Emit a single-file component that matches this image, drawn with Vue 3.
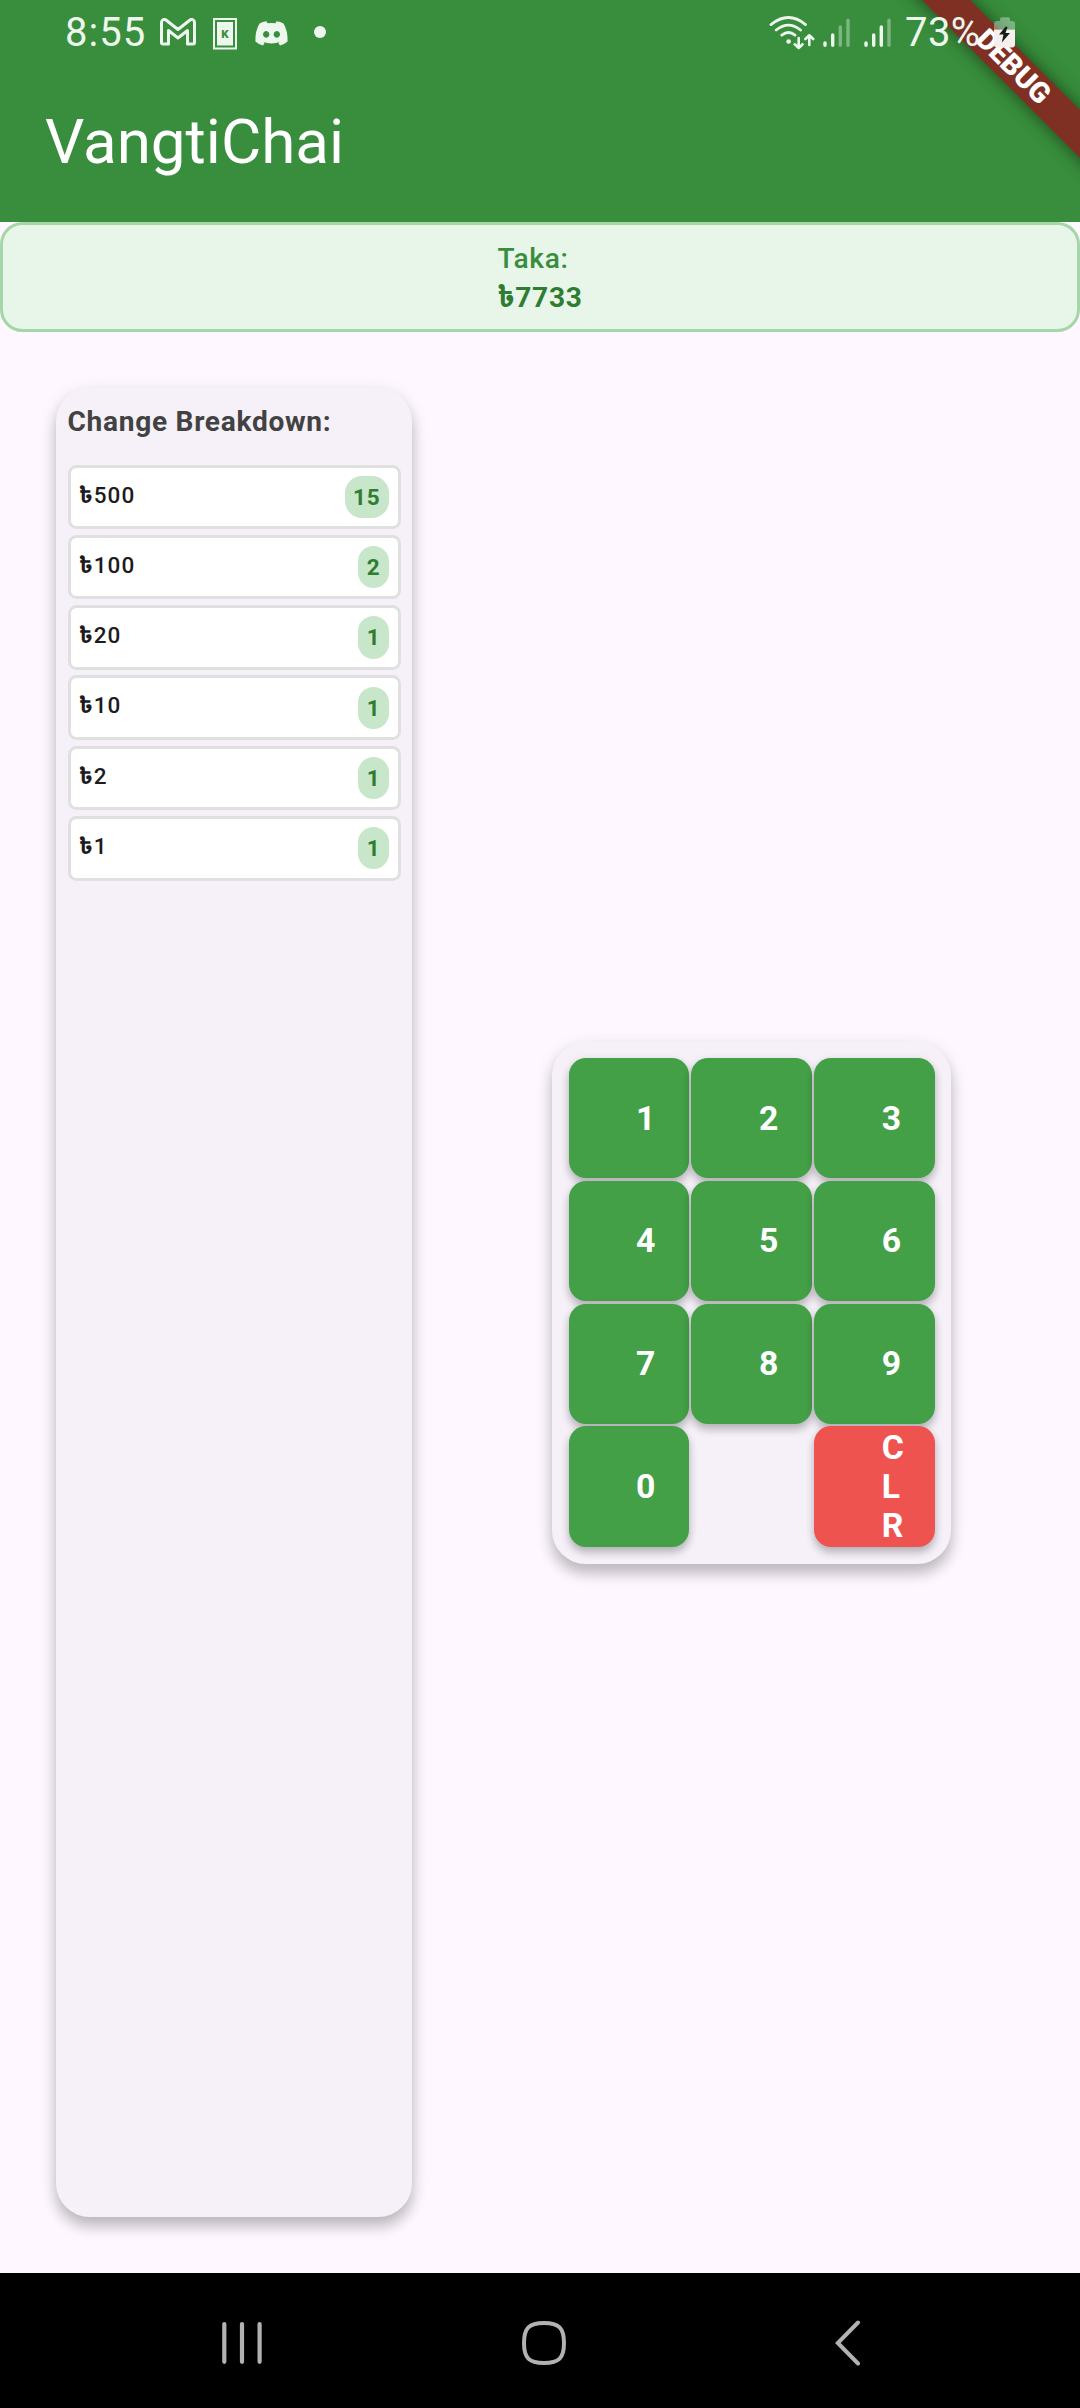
<script setup>
const rows = [
  { note: 500, count: 15 },
  { note: 100, count: 2 },
  { note: 20, count: 1 },
  { note: 10, count: 1 },
  { note: 2, count: 1 },
  { note: 1, count: 1 },
]
const keys = ['1', '2', '3', '4', '5', '6', '7', '8', '9', '0', '', 'CLR']
</script>

<template>
  <div class="screen">
    <header class="top">
      <div class="ribbon-clip"><div class="ribbon">DEBUG</div></div>
      <div class="status">
        <span class="clock">8:55</span>
        <svg class="gmail" width="36" height="28" viewBox="0 0 36 28">
          <path d="M1.5 4.5C1.5 1.8 4 .6 6 2L18 11.5 30 2C32 .6 34.500 1.800 34.500 4.500V24.500Q34.500 26 33 26H27.500V12.500L18 20 8.500 12.500V26H3Q1.500 26 1.500 24.500Z" fill="none" stroke="#eef7ee" stroke-width="3" stroke-linejoin="round" />
        </svg>
        <svg class="kbox" width="24" height="32" viewBox="0 0 24 32">
          <rect x="1" y="1" width="22" height="29.500" fill="none" stroke="#eef7ee" stroke-width="2" />
          <rect x="4" y="4" width="16" height="23.500" fill="#eef7ee" />
          <text x="12" y="19.500" text-anchor="middle" font-family="Roboto, sans-serif" font-size="11.500" font-weight="900" fill="#388e3c">K</text>
        </svg>
        <svg class="discord" width="33" height="25" viewBox="0 0 33 25">
          <path fill-rule="evenodd" fill="#eef7ee" d="M11.500.3 12.500 2.200Q16.500 1.600 20.500 2.200L21.500.3Q25.500.8 28.500 2.500 33 10 32.600 20.500 29.500 23.300 25 24.600L23.200 21.800 25.500 20.500Q16.500 24.300 7.500 20.500L9.800 21.800 8 24.600Q3.500 23.300.4 20.500 0 10 4.500 2.500 7.500.8 11.500.3ZM11.200 10a3.200 3.400 0 1 0 .01 0ZM21.800 10a3.200 3.400 0 1 0 .01 0Z" />
        </svg>
        <i class="dot"></i>
        <svg class="wifi" width="46" height="34" viewBox="0 0 46 34">
          <g fill="none" stroke="#eef7ee" stroke-width="2.800" stroke-linecap="round" stroke-linejoin="round">
            <path d="M2 8.600Q19.500-5.500 36.500 8.600M7.200 14Q19.500 4.200 31.500 14M12.800 19.200Q19.500 13.800 26 19.200" />
            <path stroke-width="2.600" d="M29.700 22V31.500M25.800 28.300 29.700 32 33.600 28.300M40.300 29V19.600M36.400 23 40.300 19.300 44.200 23" />
          </g>
          <circle cx="19.600" cy="25.500" r="2.300" fill="#eef7ee" />
        </svg>
        <svg class="signal" width="28" height="30" viewBox="0 0 28 30" stroke-width="3.400" stroke-linecap="round" stroke="#eef7ee">
          <path d="M2 25V27.300M9.700 17V27.300" /><path opacity=".38" d="M17.300 9V27.300M25 2.200V27.300" />
        </svg>
        <svg class="signal second" width="28" height="30" viewBox="0 0 28 30" stroke-width="3.400" stroke-linecap="round" stroke="#eef7ee">
          <path d="M2 25V27.300M9.700 17V27.300M17.300 9V27.300" /><path opacity=".38" d="M25 2.200V27.300" />
        </svg>
        <span class="percent">73%</span>
        <svg class="battery" width="22" height="31" viewBox="0 0 22 31">
          <path fill="#fff" fill-opacity=".35" d="M6 4V2Q6 .3 7.800.3H14.200Q16 .3 16 2V4H18Q21 4 21 7V12.500H0V7Q0 4 3 4Z" />
          <path fill="#f6efee" d="M0 12.500H21V27.500Q21 30.500 18 30.500H3Q0 30.500 0 27.500Z" />
          <path fill="#151c17" d="M11.800 9.500 5 17.600H9.500L7.800 25.500 16 16H11.500L13.500 10Z" />
        </svg>
      </div>
      <h1>VangtiChai</h1>
    </header>

    <section class="total">
      <div>
        <p class="label">Taka:</p>
        <p class="amount">৳7733</p>
      </div>
    </section>

    <main>
      <section class="breakdown">
        <h2>Change Breakdown:</h2>
        <div v-for="r in rows" :key="r.note" class="row">
          <span class="note"><b>৳</b>{{ r.note }}</span>
          <span class="badge">{{ r.count }}</span>
        </div>
      </section>
      <section class="keypad">
        <template v-for="(k, i) in keys" :key="i">
          <button v-if="k" :class="{ clear: k === 'CLR' }"><span>{{ k }}</span></button>
          <i v-else></i>
        </template>
      </section>
    </main>

    <nav>
      <svg width="42" height="46" viewBox="0 0 42 46" stroke="#b2b2b2" stroke-width="4.200" stroke-linecap="round">
        <path d="M3.300 5V42.800M21 5V42.800M38.600 5V42.800" />
      </svg>
      <svg class="home" width="44" height="44" viewBox="0 0 44 44">
        <path d="M22 2C37 2 42 7 42 22S37 42 22 42 2 37 2 22 7 2 22 2Z" fill="none" stroke="#b2b2b2" stroke-width="4" />
      </svg>
      <svg class="back" width="26" height="46" viewBox="0 0 26 46">
        <path d="M23 2.500 2.800 23 23 43.500" fill="none" stroke="#b2b2b2" stroke-width="4" stroke-linecap="round" />
      </svg>
    </nav>
  </div>
</template>

<style>
body { margin: 0; }
</style>

<style scoped>
* { box-sizing: border-box; }
.screen {
  width: 1080px;
  height: 2408px;
  display: flex;
  flex-direction: column;
  overflow: hidden;
  background: #fef7ff;
  font-family: Roboto, "Noto Sans Bengali", sans-serif;
}
h1, h2, p { margin: 0; }
.top { position: relative; height: 222px; background: #388e3c; flex: none; }
.ribbon-clip { position: absolute; inset: 0; overflow: hidden; }
.ribbon {
  position: absolute;
  left: 863px;
  top: 50.100px;
  width: 300px;
  height: 33.750px;
  transform: rotate(45deg);
  background: #803022;
  box-shadow: 0 0 17px rgba(0, 0, 0, .5);
  color: #fff;
  font-size: 28.700px;
  line-height: 33.750px;
  font-weight: 900;
  text-align: center;
}
.status { position: relative; height: 62px; display: flex; align-items: flex-start; color: #eef7ee; }
.status svg { flex: none; display: block; }
.clock, .percent { font-size: 40px; line-height: 46px; margin-top: 9.500px; flex: none; }
.clock { margin-left: 65px; width: 80px; letter-spacing: 1px; }
.gmail { margin: 18px 0 0 14.500px; }
.kbox { margin: 17.500px 0 0 17px; }
.discord { margin: 20.500px 0 0 18.500px; }
.dot { width: 12px; height: 12px; border-radius: 50%; background: #eef7ee; margin: 26px 0 0 26px; }
.wifi { margin: 16px 0 0 443px; }
.signal { margin: 18px 0 0 8px; }
.second { margin-left: 13px; }
.percent { margin-left: 13px; width: 81px; white-space: nowrap; letter-spacing: .4px; }
.battery { margin: 16.500px 0 0 8px; }
h1 { padding-left: 45px; font-size: 61.900px; line-height: 160px; font-weight: 400; color: #fff; }
.total {
  height: 110px;
  flex: none;
  border: 3px solid #a5d6a7;
  border-radius: 22.500px;
  background: #e8f5e9;
  display: flex;
  justify-content: center;
  padding-top: 14px;
  font-size: 28.100px;
  line-height: 39px;
}
.label { color: #388e3c; font-weight: 500; letter-spacing: .7px; }
.amount { color: #2e7d32; font-weight: 700; letter-spacing: .7px; }
main { flex: 1; display: flex; align-items: center; min-height: 0; }
.breakdown {
  align-self: stretch;
  width: 356px;
  margin: 56px 0 56px 56px;
  padding: 14px 11.500px 0;
  border-radius: 33.750px;
  background: #f6f1f9;
  box-shadow: 0 10px 14px rgba(0, 0, 0, .2), 0 4px 18px rgba(0, 0, 0, .1);
}
h2 { font-size: 28.100px; line-height: 39px; font-weight: 700; color: #424242; letter-spacing: .7px; margin-bottom: 23.500px; white-space: nowrap; }
.row {
  height: 64.500px;
  margin-bottom: 5.830px;
  border: 3px solid #e0e0e0;
  border-radius: 8.500px;
  background: #fff;
  padding: 0 8.400px;
  display: flex;
  justify-content: space-between;
  align-items: center;
  font-size: 22.500px;
}
.note { font-weight: 500; color: #1d1b20; letter-spacing: 1.100px; line-height: 32px; margin-bottom: 4.500px; }
.note b { font-weight: 700; }
.badge { height: 42.200px; line-height: 42.200px; padding: 0 8.400px; border-radius: 17px; background: #c8e6c9; color: #2e7d32; font-weight: 700; letter-spacing: 1px; }
.keypad {
  width: 399px;
  height: 522px;
  margin-left: 140px;
  padding: 16.500px;
  border-radius: 33.750px;
  background: #f6f1f9;
  display: grid;
  grid-template-columns: repeat(3, 120.300px);
  grid-auto-rows: 120.200px;
  gap: 2.600px;
  box-shadow: 0 10px 14px rgba(0, 0, 0, .2), 0 4px 18px rgba(0, 0, 0, .1);
}
button {
  border: 0;
  border-radius: 16.900px;
  background: #43a047;
  padding: 0 0 0 67.500px;
  color: #fff;
  font-family: inherit;
  font-size: 33.750px;
  line-height: 39px;
  font-weight: 700;
  text-align: left;
  box-shadow: 0 6px 9px rgba(0, 0, 0, .2), 0 2px 10px rgba(0, 0, 0, .1);
}
button span { display: block; width: 22px; word-break: break-all; }
.clear { background: #ef5350; }
nav { height: 135px; flex: none; background: #000; display: flex; padding: 46px 0 0 221px; }
.home { margin: 2px 0 0 259px; }
.back { margin: 1px 0 0 269px; }
</style>
